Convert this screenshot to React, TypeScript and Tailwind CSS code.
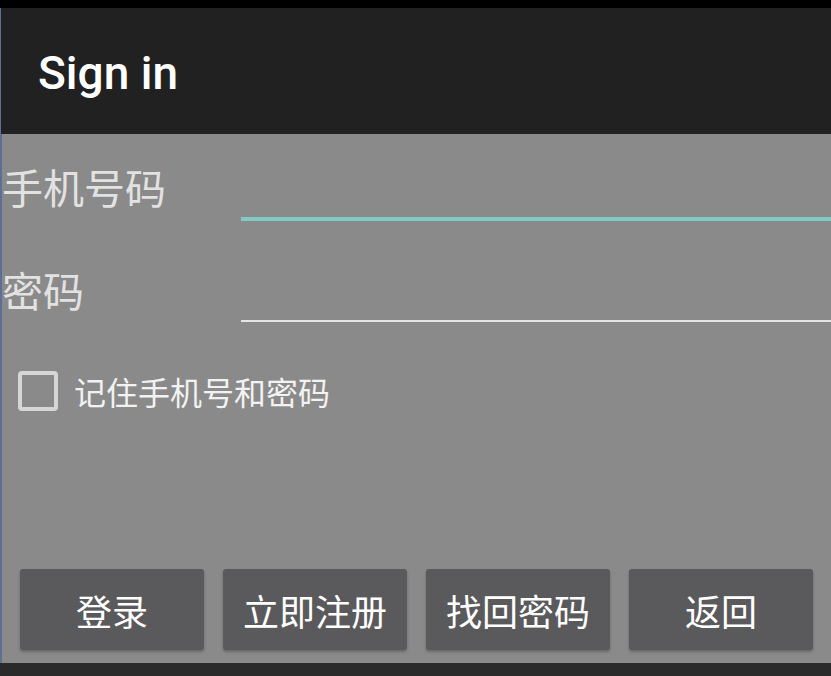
import React from "react";

const cjk = { fontFamily: '"Noto Sans CJK SC", "Noto Sans", sans-serif' };

const buttons = ["登录", "立即注册", "找回密码", "返回"];

export default function App() {
  return (
    <div className="w-[831px] h-[676px] flex flex-col bg-black overflow-hidden">
      <div className="h-[8px] bg-black" />
      <div className="h-[126px] bg-[#212121] flex items-center pl-[37px] border-l border-[#5d6f93]">
        <h1 className="text-[46px] leading-none font-medium text-white pt-[4px]" style={{ fontFamily: "Roboto, sans-serif" }}>
          Sign in
        </h1>
      </div>

      <div className="flex-1 bg-[#8a8a8a] flex flex-col border-l-2 border-[#5d6f93]" style={cjk}>
        <div className="flex h-[87px]">
          <label className="w-[239px] self-end mb-[11px] text-[41px] leading-[48px] text-[#e2e2e2]">手机号码</label>
          <div className="flex-1 border-b-4 border-[#80cbc4]" />
        </div>
        <div className="flex h-[101px]">
          <label className="w-[239px] self-end mb-[9px] text-[41px] leading-[48px] text-[#e2e2e2]">密码</label>
          <div className="flex-1 border-b-2 border-[#e4e4e4]" />
        </div>

        <div className="flex items-center mt-[49px] pl-[16px] gap-[16px]">
          <div className="w-[40px] h-[40px] border-4 border-[#d6d6d6] rounded-[4px]" />
          <span className="text-[32px] leading-[40px] text-[#f2f2f2]">记住手机号和密码</span>
        </div>

        <div className="mt-auto grid grid-cols-4 gap-[19px] pl-[18px] pr-[18px] pb-[13px]">
          {buttons.map((b) => (
            <button
              key={b}
              className="h-[81px] rounded-[3px] bg-[#5a5a5c] text-white text-[36px] leading-none shadow-[0_2px_3px_rgba(0,0,0,0.25)]"
            >
              {b}
            </button>
          ))}
        </div>
      </div>
      <div className="h-[13px] bg-[#2a2a2a]" />
    </div>
  );
}
